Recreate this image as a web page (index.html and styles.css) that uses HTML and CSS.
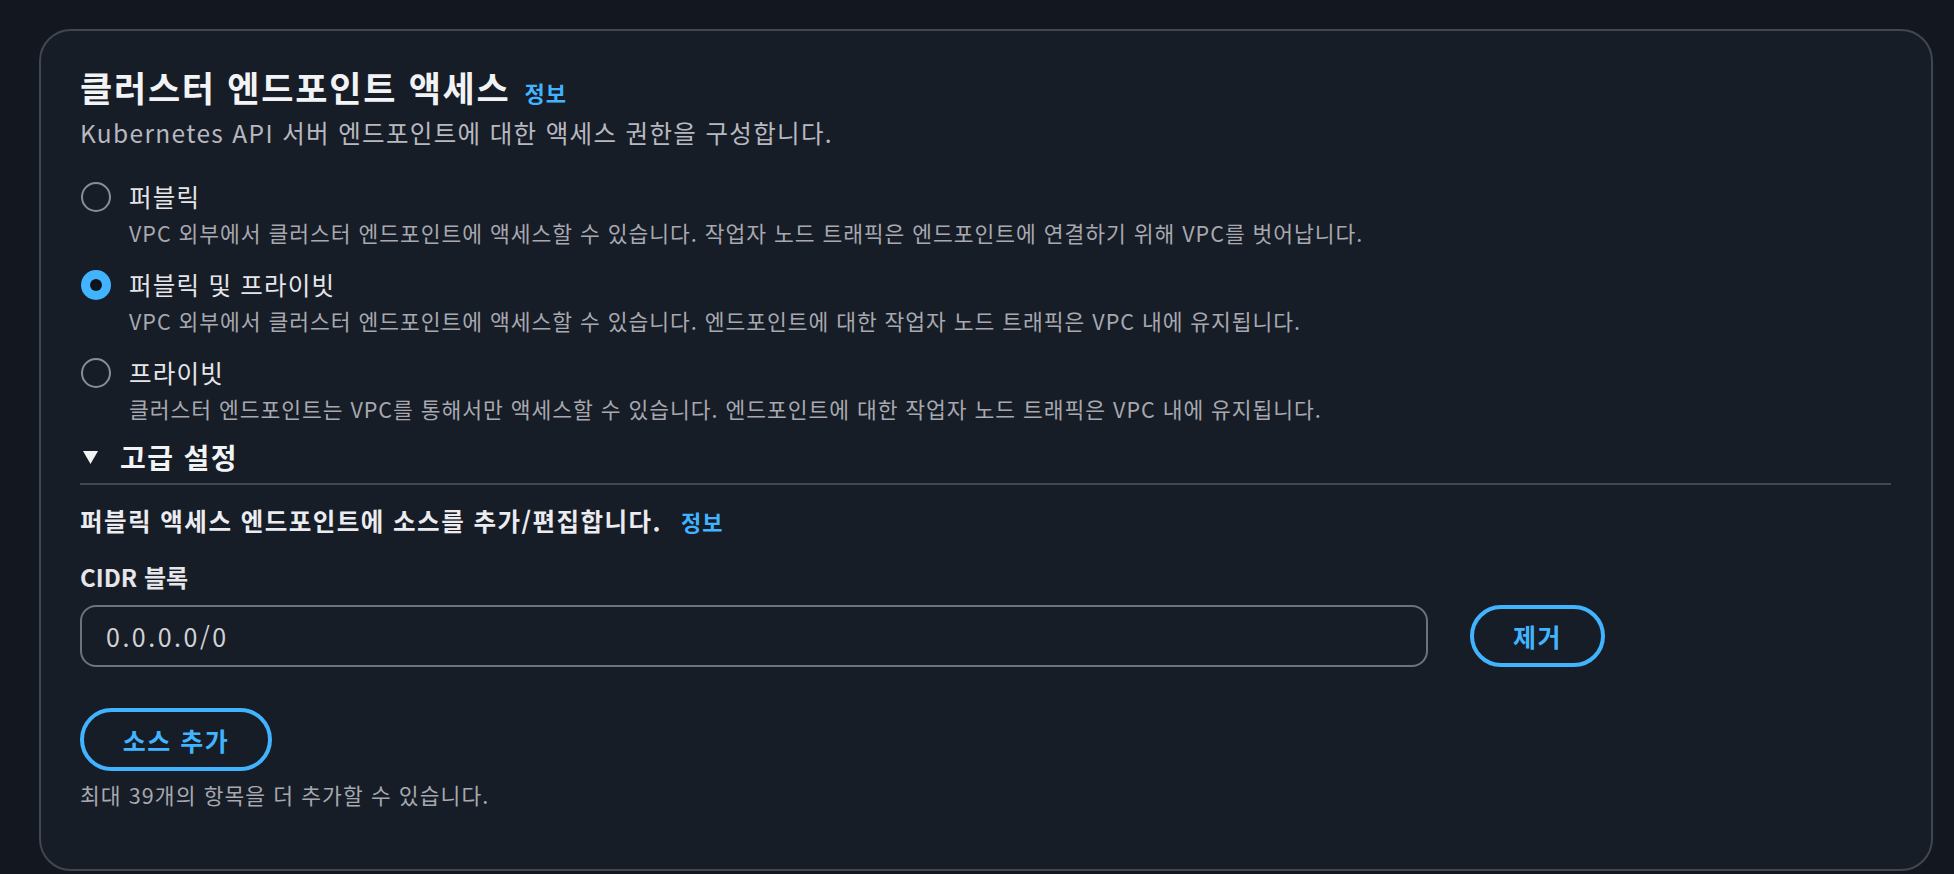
FILE: index.html
```html
<!DOCTYPE html>
<html lang="ko">
<head>
<meta charset="utf-8">
<title>클러스터 엔드포인트 액세스</title>
<link rel="stylesheet" href="styles.css">
</head>
<body>
<section class="card">
  <div class="title-row">
    <h2 class="title">클러스터 엔드포인트 액세스</h2>
    <a class="info">정보</a>
  </div>
  <p class="subtitle">Kubernetes API 서버 엔드포인트에 대한 액세스 권한을 구성합니다.</p>

  <div class="radio-group">
    <div class="radio-item">
      <span class="radio-cell"><span class="radio"></span></span>
      <span class="radio-label">퍼블릭</span>
      <span class="radio-desc">VPC 외부에서 클러스터 엔드포인트에 액세스할 수 있습니다. 작업자 노드 트래픽은 엔드포인트에 연결하기 위해 VPC를 벗어납니다.</span>
    </div>
    <div class="radio-item">
      <span class="radio-cell"><span class="radio checked"></span></span>
      <span class="radio-label">퍼블릭 및 프라이빗</span>
      <span class="radio-desc">VPC 외부에서 클러스터 엔드포인트에 액세스할 수 있습니다. 엔드포인트에 대한 작업자 노드 트래픽은 VPC 내에 유지됩니다.</span>
    </div>
    <div class="radio-item">
      <span class="radio-cell"><span class="radio"></span></span>
      <span class="radio-label">프라이빗</span>
      <span class="radio-desc">클러스터 엔드포인트는 VPC를 통해서만 액세스할 수 있습니다. 엔드포인트에 대한 작업자 노드 트래픽은 VPC 내에 유지됩니다.</span>
    </div>
  </div>

  <div class="expand-header">
    <span class="caret"><svg width="15" height="13" viewBox="0 0 15 13"><path d="M0 0 H15 L7.5 13 Z" fill="#f2f3f5"/></svg></span>
    <span class="expand-title">고급 설정</span>
  </div>

  <div class="section-title-row">
    <span class="section-title">퍼블릭 액세스 엔드포인트에 소스를 추가/편집합니다.</span>
    <a class="info">정보</a>
  </div>

  <div class="field-label">CIDR 블록</div>
  <div class="input-row">
    <div class="input">0.0.0.0/0</div>
    <button class="btn btn-remove">제거</button>
  </div>

  <button class="btn btn-add">소스 추가</button>
  <p class="constraint">최대 39개의 항목을 더 추가할 수 있습니다.</p>
</section>
</body>
</html>
```

FILE: styles.css
```css
html, body {
  margin: 0;
  background: #131820;
}
body {
  padding: 29px 21px 3px 39px;
  font-family: "Noto Sans CJK KR", "Noto Sans", sans-serif;
  color: #c6c6cd;
}
.card {
  box-sizing: border-box;
  height: 842px;
  border: 2px solid #424650;
  border-radius: 32px;
  background: #161d26;
  padding: 34px 40px 0 39px;
}
.title-row {
  display: flex;
  align-items: baseline;
  gap: 14px;
}
.title {
  margin: 0;
  font-size: 35px;
  line-height: 44px;
  font-weight: 700;
  letter-spacing: 0.05em;
  color: #f2f3f5;
}
.info {
  font-size: 22px;
  font-weight: 700;
  letter-spacing: 0.05em;
  color: #42b4ff;
  text-decoration: none;
}
.subtitle {
  margin: 8px 0 0;
  font-size: 24.5px;
  line-height: 32px;
  letter-spacing: 0.055em;
  color: #b8b8c0;
}
.radio-group {
  margin-top: 30px;
  display: flex;
  flex-direction: column;
  gap: 16px;
}
.radio-item {
  display: grid;
  grid-template-columns: 32px 1fr;
  column-gap: 17px;
}
.radio-cell {
  height: 36px;
  display: flex;
  align-items: center;
  justify-content: center;
}
.radio {
  box-sizing: border-box;
  width: 30px;
  height: 30px;
  border-radius: 50%;
  border: 2px solid #8c8c94;
  display: flex;
  align-items: center;
  justify-content: center;
}
.radio.checked {
  border: none;
  background: #42b4ff;
}
.radio.checked::after {
  content: "";
  width: 12px;
  height: 12px;
  border-radius: 50%;
  background: #0f141a;
}
.radio-label {
  font-size: 24.5px;
  line-height: 36px;
  letter-spacing: 0.05em;
  color: #e6e6ea;
}
.radio-desc {
  grid-column: 2;
  font-size: 21.5px;
  line-height: 36px;
  letter-spacing: 0.045em;
  color: #a8a8b0;
}
.expand-header {
  margin-top: 12px;
  display: flex;
  align-items: center;
  gap: 20px;
  padding-bottom: 8px;
  border-bottom: 2px solid #424650;
}
.caret {
  width: 20px;
  display: flex;
  justify-content: center;
}
.caret svg { display: block; }
.expand-title {
  font-size: 28px;
  line-height: 36px;
  font-weight: 700;
  letter-spacing: 0.05em;
  color: #f2f3f5;
}
.section-title-row {
  margin-top: 19px;
  display: flex;
  align-items: baseline;
  gap: 19px;
}
.section-title {
  font-size: 24.5px;
  line-height: 34px;
  font-weight: 700;
  letter-spacing: 0.06em;
  color: #ebebf0;
}
.field-label {
  margin-top: 22px;
  font-size: 24px;
  line-height: 34px;
  font-weight: 700;
  color: #e6e6ea;
}
.input-row {
  margin-top: 11px;
  display: flex;
  gap: 42px;
}
.input {
  box-sizing: border-box;
  width: 1348px;
  height: 62px;
  border: 2px solid #6f727b;
  border-radius: 16px;
  padding-left: 24px;
  display: flex;
  align-items: center;
  font-size: 25px;
  letter-spacing: 0.1em;
  color: #d1d1d6;
}
.btn {
  box-sizing: border-box;
  border: 4px solid #42b4ff;
  border-radius: 32px;
  background: transparent;
  color: #42b4ff;
  font-family: inherit;
  font-size: 25px;
  font-weight: 700;
  letter-spacing: 0.06em;
  padding: 0;
  display: flex;
  align-items: center;
  justify-content: center;
}
.btn-remove {
  width: 135px;
  height: 62px;
}
.btn-add {
  margin-top: 41px;
  width: 192px;
  height: 63px;
}
.constraint {
  margin: 9px 0 0;
  font-size: 21.5px;
  line-height: 30px;
  letter-spacing: 0.05em;
  color: #a8a8b0;
}
```
